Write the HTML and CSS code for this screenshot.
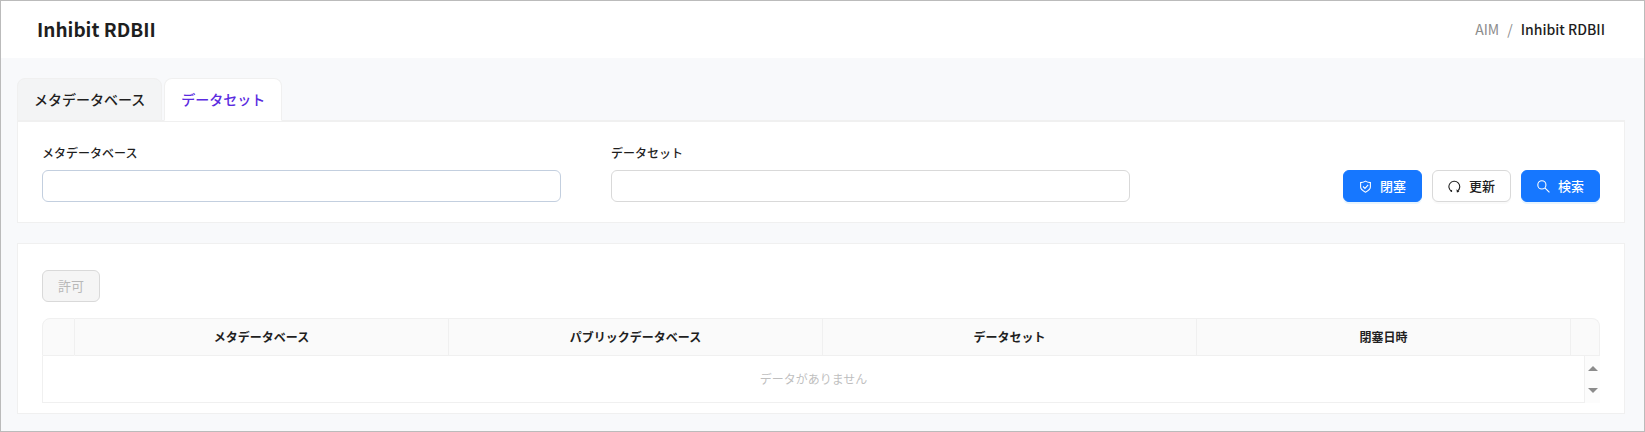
FILE: index.html
```
<!DOCTYPE html>
<html lang="ja">
<head>
<meta charset="utf-8">
<meta name="viewport" content="width=device-width, initial-scale=1">
<title>Inhibit RDBII</title>
<link rel="stylesheet" href="styles.css">
</head>
<body>
<div class="app">
  <header class="page-header">
    <h1 class="page-title">Inhibit RDBII</h1>
    <nav class="breadcrumb" aria-label="breadcrumb">
      <span class="crumb">AIM</span>
      <span class="crumb">/</span>
      <span class="crumb crumb-current">Inhibit RDBII</span>
    </nav>
  </header>

  <main class="content">
    <div class="tabs" role="tablist">
      <button class="tab" type="button" role="tab" aria-selected="false">メタデータベース</button>
      <button class="tab tab-active" type="button" role="tab" aria-selected="true">データセット</button>
    </div>

    <section class="card">
      <form class="search-form">
        <div class="field">
          <label class="field-label" for="meta-db">メタデータベース</label>
          <input class="field-input field-input-hover" id="meta-db" type="text">
        </div>
        <div class="field">
          <label class="field-label" for="dataset">データセット</label>
          <input class="field-input" id="dataset" type="text">
        </div>
        <div class="actions">
          <button class="btn btn-primary" type="button">
            <svg class="icon" viewBox="0 0 24 24" aria-hidden="true"><path d="M12 2c3 2 6 2.500 9 2.800v8.200c0 4.500-4 7-9 9.500-5-2.500-9-5-9-9.500V4.800c3-.3 6-.8 9-2.800z"/><path d="M7.500 12l3.500 3.500 6-6.500"/></svg>
            <span>閉塞</span>
          </button>
          <button class="btn" type="button">
            <svg class="icon" viewBox="0 0 24 24" aria-hidden="true"><path d="M7.200 21.300A10 10 0 1 1 17.500 20.500"/><path class="icon-solid" d="M3.500 20.500l4-2.500v4zM15.500 17l1 6 4.500-1.500z"/></svg>
            <span>更新</span>
          </button>
          <button class="btn btn-primary" type="button">
            <svg class="icon" viewBox="0 0 24 24" aria-hidden="true"><circle cx="9" cy="9" r="7.500"/><path d="M14.500 14.500L23 23"/></svg>
            <span>検索</span>
          </button>
        </div>
      </form>
    </section>

    <section class="card card-list">
      <button class="btn btn-permit" type="button" disabled>許可</button>
      <table class="grid">
        <colgroup>
          <col class="col-check"><col><col><col><col><col class="col-end">
        </colgroup>
        <thead>
          <tr>
            <th></th>
            <th>メタデータベース</th>
            <th>パブリックデータベース</th>
            <th>データセット</th>
            <th>閉塞日時</th>
            <th></th>
          </tr>
        </thead>
        <tbody>
          <tr>
            <td colspan="6">
              <div class="empty-row">
                <div class="empty-text">データがありません</div>
                <div class="scrollbar" aria-hidden="true">
                  <span class="arrow arrow-up"></span>
                  <span class="arrow arrow-down"></span>
                </div>
              </div>
            </td>
          </tr>
        </tbody>
      </table>
    </section>
  </main>
</div>
</body>
</html>
```
FILE: styles.css
```
* {
  box-sizing: border-box;
}

body {
  margin: 0;
  font-family: "Noto Sans CJK JP", sans-serif;
  font-size: 14px;
  color: #1f1f1f;
}

button,
input {
  font: inherit;
  color: inherit;
}

.app {
  min-height: 100vh;
  border: 1px solid #bbb;
  background: #f8f9fb;
}

.page-header {
  display: flex;
  align-items: center;
  justify-content: space-between;
  padding: 11px 39px 12px 36px;
  background: #fff;
}

.page-title {
  margin: 0;
  font-size: 19px;
  font-weight: 700;
  line-height: 34px;
}

.breadcrumb {
  display: flex;
  gap: 8px;
  line-height: 20px;
}

.crumb {
  color: #8c8c8c;
}

.crumb-current {
  color: #1f1f1f;
  font-weight: 500;
}

.content {
  padding: 20px 19px 16px 16px;
}

.tabs {
  display: flex;
  gap: 2px;
  border-bottom: 1px solid #f0f0f0;
}

.tab {
  height: 43px;
  margin-bottom: -1px;
  padding: 0 16px 2px;
  border: 1px solid #f0f0f0;
  border-radius: 8px 8px 0 0;
  background: #f3f4f5;
  font-weight: 500;
  line-height: 22px;
}

.tab-active {
  border-bottom-color: #fff;
  background: #fff;
  color: #5b2be0;
}

.card {
  padding: 20px 24px;
  border: 1px solid #f0f0f0;
  background: #fff;
}

.card-list {
  margin-top: 20px;
  padding: 26px 24px 10px;
}

.search-form {
  display: grid;
  grid-template-columns: 21fr 21fr 17fr;
  column-gap: 50px;
  align-items: end;
}

.field {
  display: flex;
  flex-direction: column;
  gap: 7px;
}

.field-label {
  font-size: 12px;
  font-weight: 500;
  line-height: 21px;
}

.field-input {
  width: 100%;
  height: 32px;
  padding: 0 12px;
  border: 1px solid #d9d9d9;
  border-radius: 6px;
  background: #fff;
}

.field-input-hover {
  border-color: #c3cfdf;
}

.actions {
  display: flex;
  justify-content: flex-end;
  gap: 10px;
}

.btn {
  display: inline-flex;
  align-items: center;
  gap: 8px;
  height: 32px;
  padding: 0 15px;
  border: 1px solid #d9d9d9;
  border-radius: 6px;
  background: #fff;
  box-shadow: 0 2px 0 rgba(0, 0, 0, 0.02);
  font-size: 13px;
  font-weight: 500;
  line-height: 20px;
}

.btn-primary {
  border-color: #1677ff;
  background: #1677ff;
  box-shadow: 0 2px 0 rgba(5, 145, 255, 0.1);
  color: #fff;
}

.btn-permit {
  background: #f5f5f5;
  box-shadow: none;
  color: #b8b8b8;
  font-weight: 400;
}

.icon {
  width: 13px;
  height: 13px;
  fill: none;
  stroke: currentColor;
  stroke-width: 2;
}

.icon-solid {
  fill: currentColor;
  stroke: none;
}

.grid {
  width: 100%;
  margin-top: 16px;
  border-collapse: separate;
  border-spacing: 0;
  table-layout: fixed;
  font-size: 12px;
}

.col-check {
  width: 33px;
}

.col-end {
  width: 29px;
}

.grid th {
  height: 38px;
  padding: 0 0 2px;
  border: 1px solid #f0f0f0;
  border-left-width: 0;
  background: #fafafa;
  font-weight: 700;
}

.grid th:first-child {
  border-left-width: 1px;
  border-top-left-radius: 8px;
}

.grid th:last-child {
  border-top-right-radius: 8px;
}

.grid td {
  padding: 0;
}

.empty-row {
  display: flex;
}

.empty-text {
  flex: 1;
  padding: 13px 16px;
  border: 1px solid #f0f0f0;
  border-top: 0;
  color: #bfbfbf;
  line-height: 20px;
  text-align: center;
}

.scrollbar {
  display: flex;
  flex-direction: column;
  align-items: center;
  justify-content: space-between;
  width: 15px;
  padding: 10px 0;
  background: #fcfcfc;
}

.arrow {
  border: 5px solid transparent;
}

.arrow-up {
  border-top: 0;
  border-bottom-color: #8b8b8b;
}

.arrow-down {
  border-bottom: 0;
  border-top-color: #8b8b8b;
}
```
